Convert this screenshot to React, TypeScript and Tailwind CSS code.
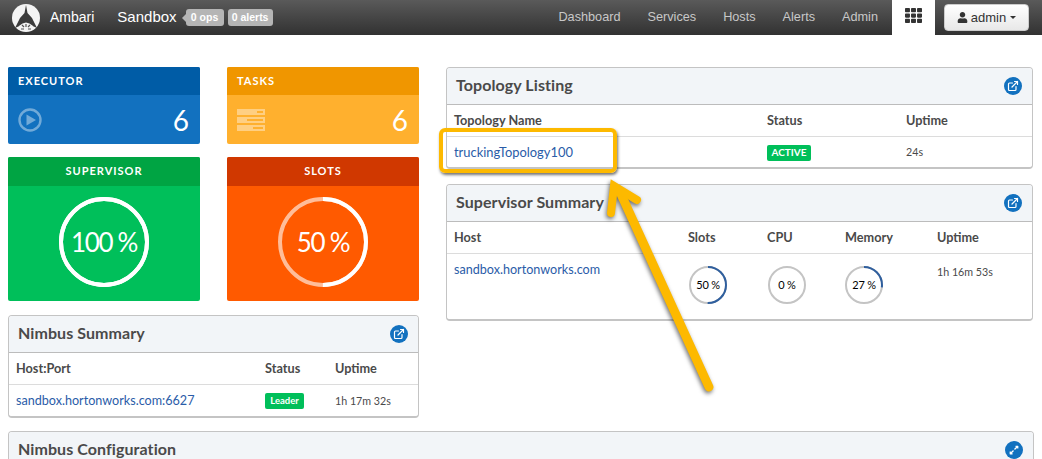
import type { ReactNode } from "react";
import { FaExpandAlt, FaTh, FaUser } from "react-icons/fa";
import { FiExternalLink } from "react-icons/fi";

const lato = "font-['Lato',sans-serif]";

function StatCard({
  title,
  head,
  body,
  center,
  tall,
  children,
}: {
  title: string;
  head: string;
  body: string;
  center?: boolean;
  tall?: boolean;
  children: ReactNode;
}) {
  return (
    <div className={`flex flex-col rounded-[2px] overflow-hidden text-white ${tall ? "h-[144px]" : "h-[77px]"} ${body}`}>
      <div
        className={`flex items-center text-[11px] font-bold tracking-[0.09em] ${tall ? "h-[29px]" : "h-[28px]"} ${center ? "justify-center" : "pl-[10px]"} ${head}`}
      >
        {title}
      </div>
      {children}
    </div>
  );
}

function Ring({ value, color }: { value: string; color: string }) {
  return (
    <div className="relative w-[90px] h-[90px] mx-auto mt-[11px] flex items-center justify-center">
      <svg viewBox="0 0 90 90" className="absolute inset-0">
        <circle cx="45" cy="45" r="43" fill="none" stroke={color} strokeWidth="4" />
        <circle cx="45" cy="45" r="43" fill="none" stroke="#fff" strokeWidth="4" strokeDasharray={value === "100 %" ? "271 0" : "135 135"} transform="rotate(-90 45 45)" />
      </svg>
      <span className="text-[26px] font-normal tracking-[-0.05em]">{value}</span>
    </div>
  );
}

function Panel({
  title,
  className,
  icon,
  children,
}: {
  title: string;
  className?: string;
  icon?: ReactNode;
  children?: ReactNode;
}) {
  return (
    <div className={`rounded-[4px] border border-[#c4c4c4] border-b-2 overflow-hidden ${className ?? ""}`}>
      <div className="h-[37px] flex items-center justify-between pl-[9px] pr-[10px] bg-[#f2f5f8] border-b border-[#bcbcbc]">
        <span className="text-[16px] font-bold tracking-[0.005em] text-[#4a4a4a] -mt-[2px]">{title}</span>
        <span className="w-[18px] h-[18px] rounded-full bg-[#1271bf] text-white flex items-center justify-center">
          {icon ?? <FiExternalLink size={12} strokeWidth={2.4} />}
        </span>
      </div>
      {children}
    </div>
  );
}

function MiniRing({ pct }: { pct: number }) {
  const c = 2 * Math.PI * 18;
  return (
    <div className="relative w-[38px] h-[38px] flex items-center justify-center">
      <svg viewBox="0 0 38 38" className="absolute inset-0">
        <circle cx="19" cy="19" r="18" fill="none" stroke="#c4c4c4" strokeWidth="2" />
        {pct > 0 && (
          <circle
            cx="19"
            cy="19"
            r="18"
            fill="none"
            stroke="#2f5f9e"
            strokeWidth="2"
            strokeDasharray={`${(c * pct) / 100} ${c}`}
            transform="rotate(-90 19 19)"
          />
        )}
      </svg>
      <span className="text-[11px] text-black tracking-[-0.02em]">{pct} %</span>
    </div>
  );
}

const thead = "text-[12.7px] font-bold text-[#4a4a4a] border-b border-[#dcdcdc] h-[32px] items-center";

export default function App() {
  return (
    <div className={`relative w-[1042px] h-[459px] overflow-hidden bg-white ${lato}`}>
      <nav className="h-[35px] flex items-center bg-gradient-to-b from-[#5a5a5a] to-[#323232] font-['Liberation_Sans',sans-serif]">
        <svg viewBox="0 0 28 28" className="w-[28px] h-[28px] ml-[12px]">
          <circle cx="14" cy="14" r="14" fill="#f4f4f4" />
          <path d="M14 1 L15.5 9 L20 14 L25 24 L14 19 L3 24 L8 14 L12.5 9 Z" fill="#3c3c3c" />
          <path d="M7 22 Q14 15 21 22 L18 27 L10 27 Z" fill="#f4f4f4" />
          <path d="M10 21 L12 23 M14 20 L14 23 M18 21 L16 23 M9 25 L12 25 M16 25 L19 25" stroke="#555" strokeWidth="1.2" />
        </svg>
        <span className="ml-[10px] text-[14px] text-white">Ambari</span>
        <span className="ml-[23px] text-[15px] text-white">Sandbox</span>
        <span className="relative ml-[9px] h-[17px] w-[38px] rounded-[3px] bg-[#b5b5b5] text-white text-[10.5px] font-bold flex items-center justify-center">
          <span className="absolute left-[-4px] top-[5px] border-y-[4px] border-r-[4px] border-y-transparent border-r-[#b5b5b5]" />
          0 ops
        </span>
        <span className="ml-[4px] h-[17px] w-[45px] rounded-[3px] bg-[#b5b5b5] text-white text-[10.5px] font-bold flex items-center justify-center">
          0 alerts
        </span>
        <div className="ml-auto flex items-center gap-[27px] text-[12.7px] text-[#c8c8c8]">
          <span>Dashboard</span>
          <span>Services</span>
          <span>Hosts</span>
          <span>Alerts</span>
          <span>Admin</span>
        </div>
        <div className="ml-[14px] w-[43px] h-[35px] bg-white flex items-start justify-center pt-[7px] text-[#333]">
          <FaTh size={17} />
        </div>
        <button className="ml-[9px] mr-[13px] w-[85px] h-[27px] rounded-[4px] border border-[#ccc] bg-gradient-to-b from-white to-[#e8e8e8] text-[#333] text-[13px] flex items-center justify-center gap-[3px]">
          <FaUser size={11} />
          admin
          <span className="ml-[1px] border-x-[3px] border-t-[3px] border-x-transparent border-t-[#333]" />
        </button>
      </nav>

      <main className="px-[8px] pt-[32px]">
        <div className="flex gap-[27px]">
          <div className="w-[411px]">
            <div className="grid grid-cols-2 gap-x-[27px] gap-y-[13px]">
              <StatCard title="EXECUTOR" head="bg-[#005ca6]" body="bg-[#1271bf]">
                <div className="flex-1 flex items-center justify-between pl-[10px] pr-[11px]">
                  <svg viewBox="0 0 24 24" className="w-[24px] h-[24px] opacity-40">
                    <circle cx="12" cy="12" r="10.5" fill="none" stroke="#fff" strokeWidth="2.4" />
                    <path d="M8.5 6.5 L18 12 L8.5 17.5 Z" fill="#fff" />
                  </svg>
                  <span className="text-[28px] font-normal leading-none">6</span>
                </div>
              </StatCard>
              <StatCard title="TASKS" head="bg-[#f09600]" body="bg-[#ffb02e]">
                <div className="flex-1 flex items-center justify-between pl-[10px] pr-[11px]">
                  <svg viewBox="0 0 28 22" className="w-[28px] h-[22px] opacity-40">
                    <path fill="#fff" fillRule="evenodd" d="M0 0h28v6H0z M20 2v2h6V2z M0 8h28v6H0z M10 10v2h16v-2z M0 16h28v6H0z M16 18v2h10v-2z" />
                  </svg>
                  <span className="text-[28px] font-normal leading-none">6</span>
                </div>
              </StatCard>
              <StatCard title="SUPERVISOR" head="bg-[#00a443]" body="bg-[#00bf5a]" center tall>
                <Ring value="100 %" color="#fff" />
              </StatCard>
              <StatCard title="SLOTS" head="bg-[#d03800]" body="bg-[#ff5a00]" center tall>
                <Ring value="50 %" color="#ffbd99" />
              </StatCard>
            </div>

            <Panel title="Nimbus Summary" className="mt-[14px] h-[103px]">
              <div className={`grid grid-cols-[249px_70px_1fr] pl-[7px] ${thead}`}>
                <span>Host:Port</span>
                <span>Status</span>
                <span>Uptime</span>
              </div>
              <div className="grid grid-cols-[249px_70px_1fr] pl-[7px] h-[32px] items-center text-[#4a4a4a]">
                <a className="text-[12.6px] text-[#2a5ca8]">sandbox.hortonworks.com:6627</a>
                <span className="w-[39px] h-[16px] rounded-[2px] bg-[#00bf5a] text-white text-[9.5px] font-bold flex items-center justify-center">
                  Leader
                </span>
                <span className="text-[10.7px]">1h 17m 32s</span>
              </div>
            </Panel>
          </div>

          <div className="w-[587px]">
            <Panel title="Topology Listing" className="h-[102px]">
              <div className={`grid grid-cols-[313px_139px_1fr] pl-[7px] ${thead}`}>
                <span>Topology Name</span>
                <span>Status</span>
                <span>Uptime</span>
              </div>
              <div className="grid grid-cols-[313px_139px_1fr] pl-[7px] h-[31px] items-center text-[#4a4a4a]">
                <a className="text-[12.9px] text-[#2a5ca8]">truckingTopology100</a>
                <span className="w-[44px] h-[16px] rounded-[2px] bg-[#00bf5a] text-white text-[10px] font-bold flex items-center justify-center">
                  ACTIVE
                </span>
                <span className="text-[10.7px]">24s</span>
              </div>
            </Panel>

            <Panel title="Supervisor Summary" className="mt-[15px] h-[137px]">
              <div className={`grid grid-cols-[234px_79px_78px_92px_1fr] pl-[7px] ${thead}`}>
                <span>Host</span>
                <span>Slots</span>
                <span>CPU</span>
                <span>Memory</span>
                <span>Uptime</span>
              </div>
              <div className="grid grid-cols-[234px_79px_78px_92px_1fr] pl-[7px] pt-[7px] text-[#4a4a4a]">
                <a className="text-[12.6px] text-[#2a5ca8]">sandbox.hortonworks.com</a>
                <div className="pt-[5px] pl-[1px]"><MiniRing pct={50} /></div>
                <div className="pt-[5px] pl-[1px]"><MiniRing pct={0} /></div>
                <div className="pt-[5px]"><MiniRing pct={27} /></div>
                <span className="text-[10.7px] pt-[3px]">1h 16m 53s</span>
              </div>
            </Panel>
          </div>
        </div>

        <Panel title="Nimbus Configuration" className="mt-[13px] h-[60px]" icon={<FaExpandAlt size={10} />} />
      </main>

      {/* annotation drawn over the screenshot */}
      <div className="absolute left-[439px] top-[128px] w-[178px] h-[45px] rounded-[6px] border-[4px] border-[#fdb900] shadow-[1px_2px_3px_rgba(0,0,0,0.55)]" />
      <svg viewBox="0 0 1042 459" className="absolute inset-0 w-[1042px] h-[459px] pointer-events-none drop-shadow-[-1px_2px_2px_rgba(0,0,0,0.55)]">
        <path d="M709 387 L620 192" fill="none" stroke="#fdb900" strokeWidth="9" strokeLinecap="round" />
        <path d="M611 213 L614 186 L637 200" fill="none" stroke="#fdb900" strokeWidth="8" strokeLinecap="round" strokeLinejoin="miter" />
      </svg>
    </div>
  );
}
